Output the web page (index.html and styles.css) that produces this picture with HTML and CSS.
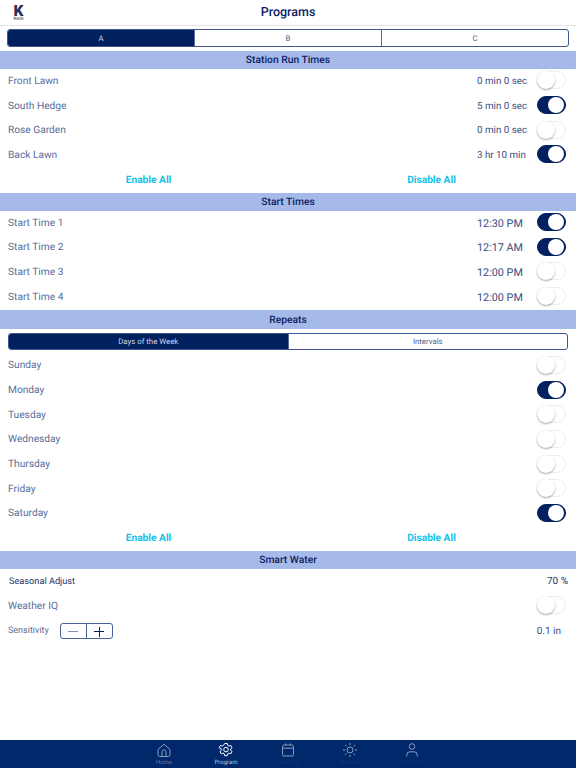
FILE: index.html
```html
<!DOCTYPE html>
<html lang="en">
<head>
    <meta charset="UTF-8">
    <meta name="viewport" content="width=device-width, initial-scale=1.0">
    <title>Programs</title>
    <link rel="stylesheet" href="styles.css">
</head>
<body>

<header class="top-bar">
    <div class="logo">
        <span class="logo-k">K</span>
        <span class="logo-rain">RAIN</span>
    </div>
    <h1>Programs</h1>
</header>

<div class="segments program-tabs">
    <div class="segment active">A</div>
    <div class="segment">B</div>
    <div class="segment">C</div>
</div>

<!-- Station Run Times -->
<div class="section-title first">Station Run Times</div>
<div class="row"><span>Front Lawn</span><span class="value">0 min 0 sec</span><span class="toggle"></span></div>
<div class="row"><span>South Hedge</span><span class="value">5 min 0 sec</span><span class="toggle on"></span></div>
<div class="row"><span>Rose Garden</span><span class="value">0 min 0 sec</span><span class="toggle"></span></div>
<div class="row"><span>Back Lawn</span><span class="value">3 hr 10 min</span><span class="toggle on"></span></div>
<div class="actions"><span>Enable All</span><span>Disable All</span></div>

<!-- Start Times -->
<div class="section-title">Start Times</div>
<div class="row"><span>Start Time 1</span><span class="value time">12:30 PM</span><span class="toggle on"></span></div>
<div class="row"><span>Start Time 2</span><span class="value time">12:17 AM</span><span class="toggle on"></span></div>
<div class="row"><span>Start Time 3</span><span class="value time">12:00 PM</span><span class="toggle"></span></div>
<div class="row"><span>Start Time 4</span><span class="value time">12:00 PM</span><span class="toggle"></span></div>

<!-- Repeats -->
<div class="section-title tall">Repeats</div>
<div class="segments repeat-tabs">
    <div class="segment active">Days of the Week</div>
    <div class="segment">Intervals</div>
</div>
<div class="row"><span>Sunday</span><span class="toggle"></span></div>
<div class="row"><span>Monday</span><span class="toggle on"></span></div>
<div class="row"><span>Tuesday</span><span class="toggle"></span></div>
<div class="row"><span>Wednesday</span><span class="toggle"></span></div>
<div class="row"><span>Thursday</span><span class="toggle"></span></div>
<div class="row"><span>Friday</span><span class="toggle"></span></div>
<div class="row"><span>Saturday</span><span class="toggle on"></span></div>
<div class="actions"><span>Enable All</span><span>Disable All</span></div>

<!-- Smart Water -->
<div class="section-title">Smart Water</div>
<div class="row seasonal"><span>Seasonal Adjust</span><span class="percent">70 %</span></div>
<div class="row"><span>Weather IQ</span><span class="toggle"></span></div>
<div class="row sensitivity">
    <span class="small-label">Sensitivity</span>
    <div class="stepper">
        <span class="step minus"></span>
        <span class="step plus"></span>
    </div>
    <span class="amount">0.1 in</span>
</div>

<!-- Bottom Tabs -->
<nav class="tab-bar">
    <div class="tab">
        <svg viewBox="0 0 16 16"><path d="M2 7.500 8 2.200l6 5.300v5.200a1.800 1.800 0 0 1-1.800 1.800H3.800A1.800 1.800 0 0 1 2 12.700z"/><path d="M6 14.500V9.800a2 2 0 0 1 4 0v4.700"/></svg>
        <span class="tab-label">Home</span>
    </div>
    <div class="tab current">
        <svg viewBox="0 0 16 16"><path d="M6.700 1.500h2.600l.4 1.900 1.300.7 1.800-.7 1.300 2.300-1.400 1.200v1.400l1.400 1.200-1.300 2.300-1.800-.7-1.300.7-.4 1.900H6.700l-.4-1.900-1.300-.7-1.800.7-1.300-2.300 1.400-1.200V6.900L1.100 5.700l1.300-2.300 1.800.7 1.300-.7z"/><circle cx="8" cy="7.600" r="2.300"/></svg>
        <span class="tab-label">Program</span>
    </div>
    <div class="tab">
        <svg viewBox="0 0 16 16"><rect x="2.500" y="3" width="11" height="11" rx="1.500"/><path d="M2.500 6.200h11M5.500 1.500V3M10.500 1.500V3"/></svg>
        <span class="tab-label dim">Calendar</span>
    </div>
    <div class="tab">
        <svg viewBox="0 0 16 16"><circle cx="8" cy="8" r="3"/><path d="M8 1v2M8 13v2M1 8h2M13 8h2M3 3l1.400 1.400M11.600 11.600 13 13M3 13l1.400-1.400M11.600 4.400 13 3"/></svg>
        <span class="tab-label dim">Weather</span>
    </div>
    <div class="tab">
        <svg viewBox="0 0 16 16"><circle cx="8" cy="4.500" r="2.800"/><path d="M2.800 14.500v-1.700a3 3 0 0 1 3-3h4.400a3 3 0 0 1 3 3v1.700"/></svg>
        <span class="tab-label dim">Account</span>
    </div>
</nav>

</body>
</html>
```
FILE: styles.css
```css
* {
    box-sizing: border-box;
}

body {
    margin: 0;
    height: 768px;
    overflow: hidden;
    display: flex;
    flex-direction: column;
    background-color: #fff;
    font-family: Roboto, "Liberation Sans", sans-serif;
    text-rendering: geometricPrecision;
    color: #5a6d9a;
}

.top-bar {
    height: 26px;
    flex: none;
    position: relative;
    border-bottom: 1px solid #e4e4e4;
    text-align: center;
}

.top-bar h1 {
    margin: 0;
    font-size: 12.500px;
    font-weight: 500;
    line-height: 25px;
    color: #0b2265;
}

.logo {
    position: absolute;
    left: 12px;
    top: 5px;
    width: 13px;
    display: flex;
    flex-direction: column;
    align-items: center;
    color: #2b3156;
}

.logo-k {
    font-size: 15.500px;
    line-height: 12px;
    font-weight: 900;
}

.logo-rain {
    font-size: 4.500px;
    line-height: 5px;
}

.segments {
    display: flex;
    flex: none;
    border: 1px solid #3f5790;
    border-radius: 3px;
    overflow: hidden;
    font-size: 7.800px;
    color: #4f6190;
}

.program-tabs {
    height: 18px;
    margin: 3px 7px 0;
}

.repeat-tabs {
    height: 17px;
    margin: 4px 8px;
}

.segment {
    flex: 1;
    display: flex;
    align-items: center;
    justify-content: center;
    border-left: 1px solid #5a6d9a;
}

.segment:first-child {
    border-left: none;
}

.segment.active {
    background-color: #00205f;
    color: #cfd7e8;
}

.section-title {
    height: 18px;
    flex: none;
    background-color: #a6baea;
    color: #0b2265;
    font-size: 10.300px;
    font-weight: 500;
    line-height: 18px;
    text-align: center;
}

.section-title.first {
    margin-top: 4px;
}

.section-title.tall {
    height: 19px;
    line-height: 19px;
}

.row {
    height: 24.700px;
    flex: none;
    display: flex;
    align-items: center;
    padding: 0 10px 0 8px;
    font-size: 10.200px;
}

.row > span:first-child {
    margin-right: auto;
}

.value {
    width: 60px;
    font-size: 9.800px;
    color: #3a4d80;
}

.value.time {
    font-size: 10.800px;
}

.toggle {
    width: 29px;
    height: 18px;
    margin-bottom: 2px;
    border-radius: 9px;
    position: relative;
    background-color: #fff;
    border: 1px solid #ececec;
}

.toggle::after {
    content: "";
    position: absolute;
    left: -1px;
    top: -1px;
    width: 18px;
    height: 18px;
    border-radius: 50%;
    background-color: #fff;
    box-shadow: 0 1px 2px rgba(0, 0, 0, 0.35);
}

.toggle.on {
    background-color: #00205f;
    border-color: #00205f;
}

.toggle.on::after {
    left: 10px;
    top: 0;
    width: 16px;
    height: 16px;
    box-shadow: none;
}

.actions {
    height: 25px;
    flex: none;
    display: grid;
    grid-template-columns: 1fr 1fr;
    align-items: center;
    padding: 0 3px 0 7px;
    text-align: center;
    font-size: 10.200px;
    font-weight: 700;
    color: #12c2e9;
}

.seasonal {
    padding: 0 8px 0 9px;
    font-size: 9.200px;
    color: #1c3068;
}

.percent {
    font-size: 10px;
}

.small-label {
    font-size: 9px;
    margin-right: 11px !important;
}

.amount {
    margin-left: auto;
    margin-right: 5px;
    font-size: 10px;
    color: #3a4d80;
}

.stepper {
    width: 53px;
    height: 16px;
    display: flex;
    border: 1px solid #4a6199;
    border-radius: 3px;
}

.step {
    flex: 1;
    position: relative;
}

.step::before {
    content: "";
    position: absolute;
    left: 50%;
    top: 50%;
    width: 10px;
    height: 1px;
    margin: 0 0 0 -5px;
    background-color: #8090b5;
}

.plus {
    border-left: 1px solid #4a6199;
}

.plus::before {
    background-color: #00205f;
}

.plus::after {
    content: "";
    position: absolute;
    left: 50%;
    top: 50%;
    width: 1px;
    height: 10px;
    margin: -4.500px 0 0 0;
    background-color: #00205f;
}

.tab-bar {
    margin-top: auto;
    height: 28px;
    flex: none;
    display: flex;
    justify-content: center;
    gap: 14px;
    background-color: #00286b;
}

.tab {
    width: 48px;
    display: flex;
    flex-direction: column;
    align-items: center;
    padding-top: 2px;
}

.tab svg {
    width: 16px;
    height: 16px;
    fill: none;
    stroke: #8a9cbf;
    stroke-width: 1;
}

.tab.current svg {
    stroke: #fff;
}

.tab-label {
    font-size: 6px;
    line-height: 8px;
    margin-top: 1px;
    color: #5f7ba8;
}

.tab.current .tab-label {
    color: #b9c6dd;
}

.tab-label.dim {
    color: #0b3478;
}
```
